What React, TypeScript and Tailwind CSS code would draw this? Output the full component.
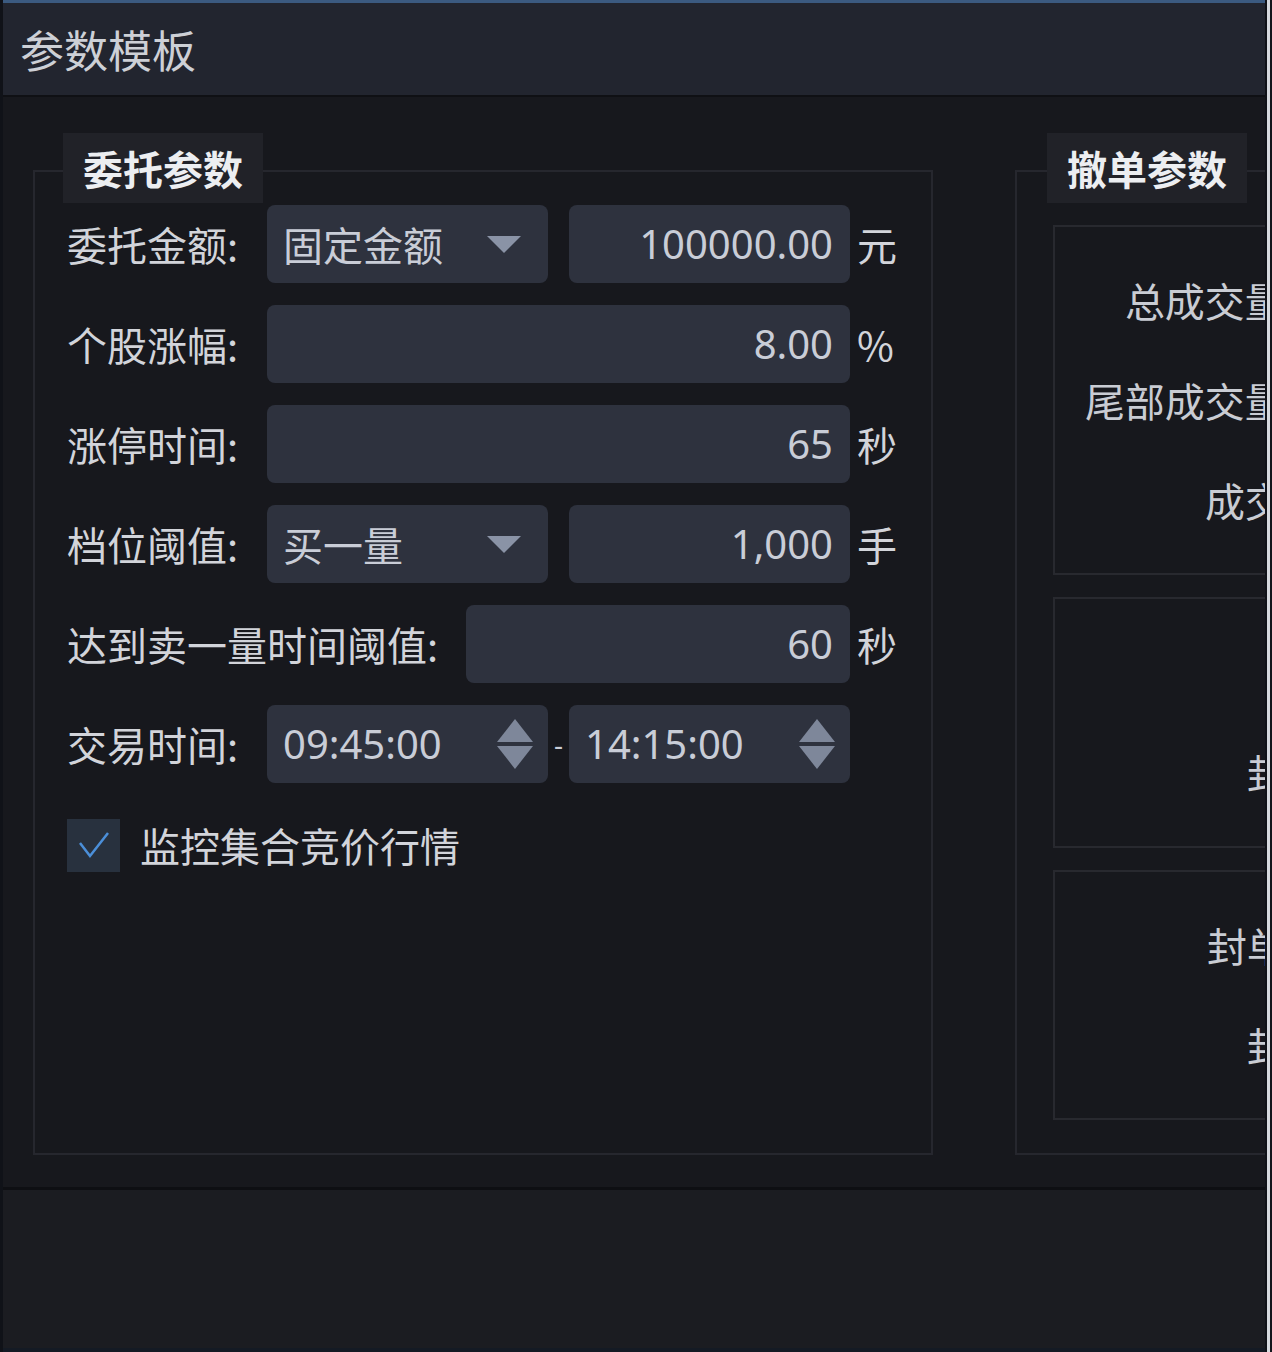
const cjk = { fontFamily: '"Noto Sans CJK SC", "Noto Sans", sans-serif' }
const num = { fontFamily: '"Noto Sans", "Noto Sans CJK SC", sans-serif' }

function Caret() {
  return (
    <svg className="h-[17px] w-[34px]" viewBox="0 0 34 17">
      <path d="M0 0 H34 L17 17 Z" fill="#8a93a6" />
    </svg>
  )
}

function Spinner() {
  return (
    <svg className="h-[50px] w-[36px]" viewBox="0 0 36 50">
      <path d="M18 0 L36 23 H0 Z" fill="#7e879a" />
      <path d="M0 27 H36 L18 50 Z" fill="#7e879a" />
    </svg>
  )
}

function Select({ value }: { value: string }) {
  return (
    <div className="flex h-[78px] w-[281px] items-center justify-between rounded-[8px] bg-[#2e323e] pr-[27px] pl-[16px]">
      <span className="text-[#c9cdd7] text-[40px]" style={cjk}>
        {value}
      </span>
      <Caret />
    </div>
  )
}

function NumberBox({ value, width }: { value: string; width: string }) {
  return (
    <div
      className={`flex h-[78px] items-center justify-end rounded-[8px] bg-[#2e323e] pr-[17px] ${width}`}
    >
      <span className="text-[#c9cdd7] text-[40px]" style={num}>
        {value}
      </span>
    </div>
  )
}

function TimeBox({ value }: { value: string }) {
  return (
    <div className="flex h-[78px] w-[281px] items-center justify-between rounded-[8px] bg-[#2e323e] pr-[15px] pl-[16px]">
      <span className="text-[#c9cdd7] text-[40px]" style={num}>
        {value}
      </span>
      <Spinner />
    </div>
  )
}

function Unit({ children }: { children: string }) {
  return (
    <span className="ml-[7px] text-[#d2d4da] text-[40px]" style={cjk}>
      {children}
    </span>
  )
}

function Row({
  label,
  labelWidth = 'w-[200px]',
  children
}: {
  label: string
  labelWidth?: string
  children: React.ReactNode
}) {
  return (
    <div className="flex h-[78px] items-center">
      <span
        className={`shrink-0 text-[#d2d4da] text-[40px] ${labelWidth}`}
        style={cjk}
      >
        {label}
      </span>
      {children}
    </div>
  )
}

function Legend({
  children,
  className = ''
}: {
  children: string
  className?: string
}) {
  return (
    <div
      className={`-mt-[39px] flex h-[70px] w-fit items-center bg-[#212228] px-[20px] font-bold text-[#eceef1] text-[40px] ${className}`}
      style={cjk}
    >
      {children}
    </div>
  )
}

function SideBox({
  height,
  labelWidth,
  labels
}: {
  height: string
  labelWidth: string
  labels: string[]
}) {
  return (
    <div
      className={`flex flex-col gap-[22px] border-2 border-[#28292f] pt-[34px] ${height}`}
    >
      {labels.map((label) => (
        <div className="flex h-[78px] items-center" key={label}>
          <span
            className={`shrink-0 whitespace-nowrap text-right text-[#c9ccd3] text-[40px] ${labelWidth}`}
            style={cjk}
          >
            {label}
          </span>
        </div>
      ))}
    </div>
  )
}

export default function App() {
  return (
    <div className="flex h-[1352px] w-[1272px] overflow-hidden bg-[#14171d]">
      <div className="flex w-[1267px] shrink-0 flex-col overflow-hidden border-[#101218] border-r-2 border-l-[3px] bg-[#17181d]">
        {/* Title bar */}
        <header className="flex h-[97px] shrink-0 items-center border-[#3b5a80] border-t-[3px] border-b-2 border-b-[#0f1014] bg-[#22252f] pl-[17px]">
          <h1 className="text-[#cdd0d6] text-[44px]" style={cjk}>
            参数模板
          </h1>
        </header>

        <main className="flex h-[1093px] shrink-0 gap-[82px] border-[#0e0f13] border-b-[3px] pt-[36px] pl-[30px]">
          {/* 委托参数 */}
          <div className="w-[900px] shrink-0 pt-[37px]">
            <div className="flex h-[985px] flex-col border-2 border-[#26272e] px-[32px]">
              <Legend className="-ml-[4px]">委托参数</Legend>
              <div className="mt-[2px] flex flex-col gap-[22px]">
                <Row label="委托金额:">
                  <Select value="固定金额" />
                  <div className="w-[21px]" />
                  <NumberBox value="100000.00" width="w-[281px]" />
                  <Unit>元</Unit>
                </Row>
                <Row label="个股涨幅:">
                  <NumberBox value="8.00" width="w-[583px]" />
                  <Unit>%</Unit>
                </Row>
                <Row label="涨停时间:">
                  <NumberBox value="65" width="w-[583px]" />
                  <Unit>秒</Unit>
                </Row>
                <Row label="档位阈值:">
                  <Select value="买一量" />
                  <div className="w-[21px]" />
                  <NumberBox value="1,000" width="w-[281px]" />
                  <Unit>手</Unit>
                </Row>
                <Row label="达到卖一量时间阈值:" labelWidth="w-[399px]">
                  <NumberBox value="60" width="w-[384px]" />
                  <Unit>秒</Unit>
                </Row>
                <Row label="交易时间:">
                  <TimeBox value="09:45:00" />
                  <span className="w-[21px] text-center text-[#c9cdd7] text-[28px]">
                    -
                  </span>
                  <TimeBox value="14:15:00" />
                </Row>
              </div>

              <label className="mt-[32px] flex items-center gap-[20px]">
                <span className="flex h-[53px] w-[53px] items-center justify-center bg-[#28313e]">
                  <svg className="h-[30px] w-[34px]" viewBox="0 0 34 30">
                    <path
                      d="M3 13 L13 26 L31 3"
                      fill="none"
                      stroke="#4b8fd9"
                      strokeWidth="2.5"
                    />
                  </svg>
                </span>
                <span className="text-[#d2d4da] text-[40px]" style={cjk}>
                  监控集合竞价行情
                </span>
              </label>
            </div>
          </div>

          {/* 撤单参数 */}
          <div className="w-[700px] shrink-0 pt-[37px]">
            <div className="flex h-[985px] flex-col border-2 border-[#26272e] pl-[30px]">
              <Legend>撤单参数</Legend>
              <div className="mt-[22px] ml-[6px] flex flex-col gap-[22px]">
                <SideBox
                  height="h-[350px]"
                  labelWidth="w-[241px]"
                  labels={['总成交量:', '尾部成交量:', '成交:']}
                />
                <SideBox
                  height="h-[251px]"
                  labelWidth="w-[323px]"
                  labels={['比例:', '封单量:']}
                />
                <SideBox
                  height="h-[250px]"
                  labelWidth="w-[323px]"
                  labels={['封单时间:', '封单量:']}
                />
              </div>
            </div>
          </div>
        </main>

        <footer className="flex-1 border-[#141a24] border-b-[4px] bg-[#1b1c21]" />
      </div>
      <div className="w-[3px] shrink-0 bg-[#d6d9de]" />
    </div>
  )
}
